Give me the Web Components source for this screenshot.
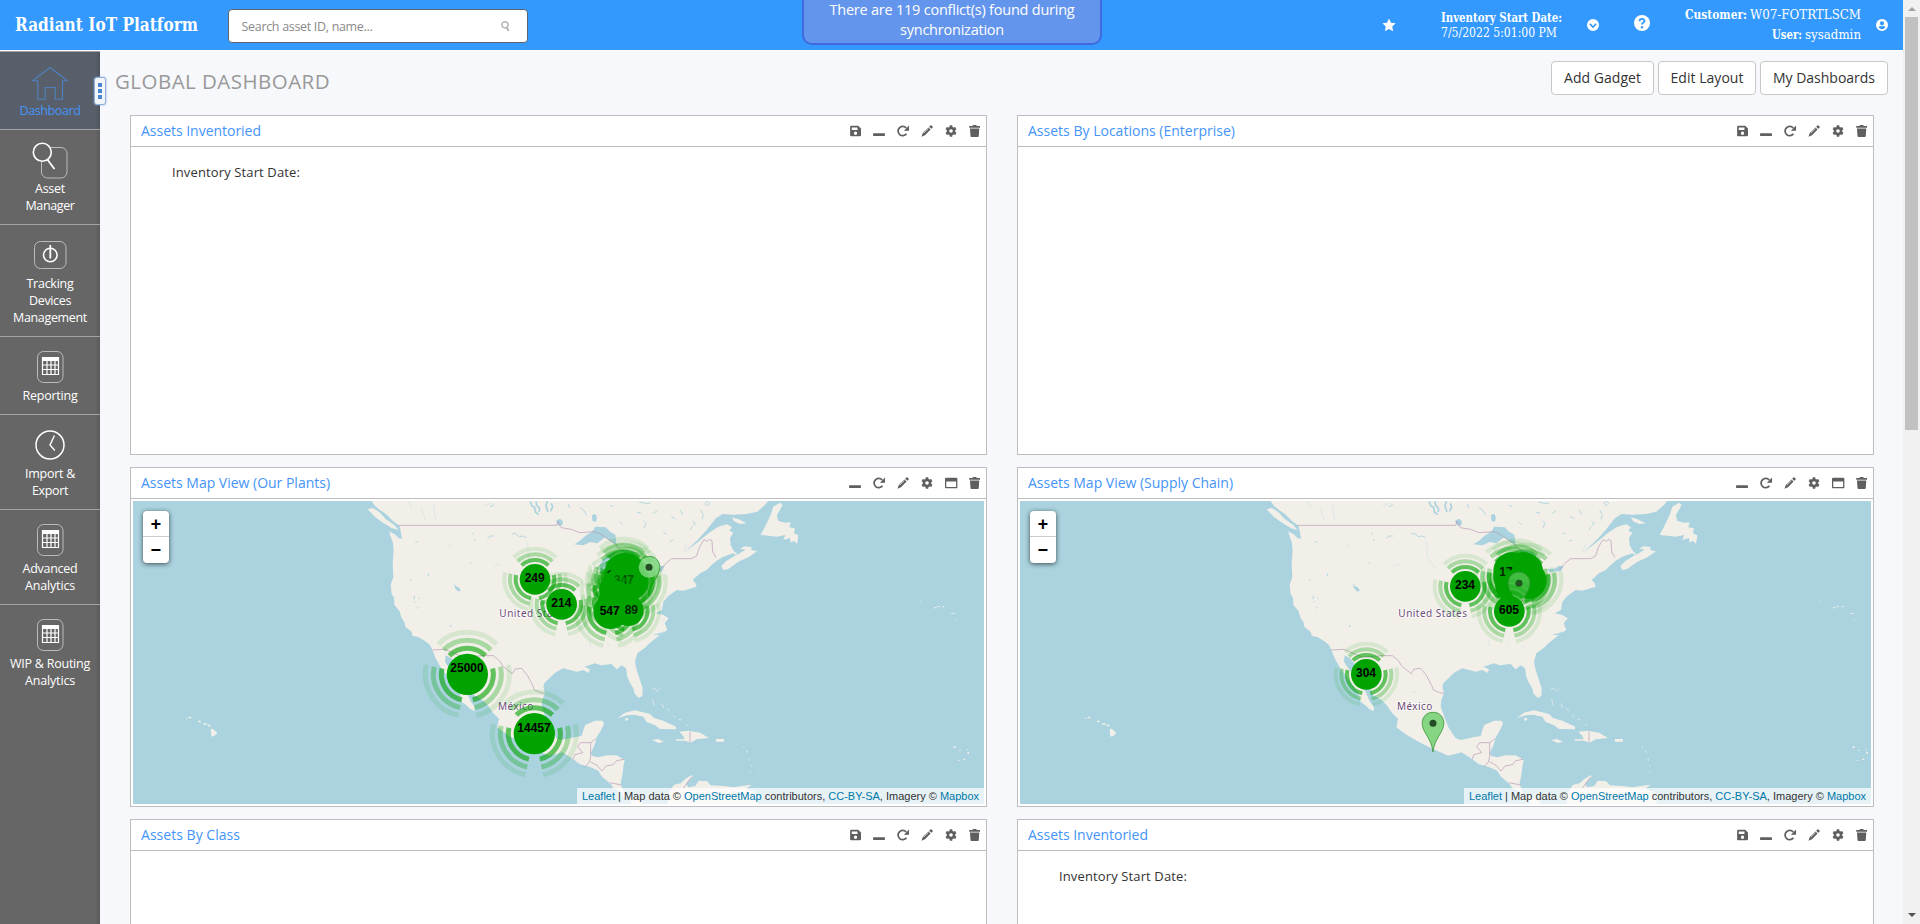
<!DOCTYPE html>
<html lang="en">
<head>
<meta charset="utf-8">
<title>Radiant IoT Platform</title>
<style>
html,body{margin:0;height:100%;overflow:hidden;background:#f6f8fb;font-family:"Open Sans","Noto Sans",sans-serif}
</style>
</head>
<body>
<iot-app></iot-app>
<script>
const define=(name,render,after)=>customElements.define(name,class extends HTMLElement{
  connectedCallback(){
    if(this.shadowRoot)return;
    const r=this.attachShadow({mode:'open'});
    r.innerHTML=render(this);
    if(after)after(this,r);
  }
});

/* Text set to an exact width: w = target px, mode "scale" condenses the glyphs */
define('fit-text',()=>`<style>:host{display:inline-block;white-space:nowrap;text-align:left}span{display:inline-block;transform-origin:0 50%}</style><span><slot></slot></span>`,
(el,r)=>{
  const w=+el.getAttribute('w'),s=r.querySelector('span'),have=s.getBoundingClientRect().width;
  if(!w||!have)return;
  if(el.getAttribute('mode')==='scale'){s.style.transform=`scaleX(${w/have})`;el.style.width=w+'px'}
  else s.style.letterSpacing=((w-have)/el.textContent.length)+'px';
});

const G={
save:'<path fill-rule="evenodd" d="M2.800 1h9.400L16 4.600V13.800a1.300 1.300 0 0 1-1.300 1.300H2.800a1.300 1.300 0 0 1-1.300-1.300V2.300A1.300 1.300 0 0 1 2.800 1zM3.700 3.200v3.600h7.600V3.200zM8.700 8.800a2.200 2.200 0 1 0 0 4.400a2.200 2.200 0 0 0 0-4.400z"/>',
min:'<rect x="0" y="11" width="16" height="3.600" rx="1"/>',
redo:'<path d="M12.600 11.800A6.200 6.200 0 1 1 12.300 4" fill="none" stroke="currentColor" stroke-width="2.300"/><path d="M16 .8v6.800H9.200z"/>',
pen:'<path d="M10 3.200l2.800 2.800-7.500 7.500L.5 15.500l2-4.800zM10.900 2.300l1.600-1.500a1.200 1.200 0 0 1 1.700 0l1.100 1.100a1.200 1.200 0 0 1 0 1.700L13.700 5.100z"/><path d="M3.800 10.800l6-6" stroke="#fff" stroke-width=".8"/>',
gear:'<path fill-rule="evenodd" d="M6.400.4h3.200l.4 2.200 1.400.8 2.200-.7 1.600 2.800-1.600 1.500v1.900l1.600 1.500-1.600 2.800-2.200-.7-1.400.8-.4 2.200H6.400l-.4-2.200-1.400-.8-2.200.7L.8 10.400l1.600-1.500V7L.8 5.500l1.600-2.800 2.200.7L6 2.600zM8 5.600a2.400 2.400 0 1 0 0 4.800a2.400 2.400 0 0 0 0-4.800z"/>',
max:'<path fill-rule="evenodd" d="M1.500 1h13.500A1.500 1.500 0 0 1 16.500 2.500v11.600a1 1 0 0 1-1 1H1a1 1 0 0 1-1-1V2.500a1.500 1.500 0 0 1 1.500-1.500zM1.700 6v7.400h13.100V6z"/>',
trash:'<path d="M.3 1.300h4.200L5.500 0h4l1 1.300h4.200v2.200H.3zM1.300 4.500h12.400l-.7 10.300a1.300 1.300 0 0 1-1.300 1.200H3.300A1.300 1.300 0 0 1 2 14.800z"/>',
star:'<path d="M8 .5l2.300 4.900 5.300.7-3.900 3.700 1 5.400L8 12.600l-4.700 2.600 1-5.400L.4 6.100l5.300-.7z"/>',
down:'<path fill-rule="evenodd" d="M8 0a8 8 0 1 0 0 16A8 8 0 0 0 8 0zM4.600 5.800L8 9.200l3.400-3.400 1.500 1.500L8 12.200 3.100 7.300z"/>',
help:'<circle cx="8" cy="8" r="8"/><path d="M5.500 6.200C5.700 3 10.600 3.200 10.400 6 10.300 7.700 8 7.700 8 9.600" fill="none" stroke="#39f" stroke-width="1.900"/><circle cx="8" cy="12.200" r="1.200" fill="#39f"/>',
user:'<path fill-rule="evenodd" d="M8 0a8 8 0 1 0 0 16A8 8 0 0 0 8 0zM8 3a2.800 2.800 0 1 1 0 5.600A2.800 2.800 0 0 1 8 3zM3.500 11c1.200-1.500 2.200-1.700 3-1.700.8.400 2.200.4 3 0 .8 0 1.800.2 3 1.700-.8 1.300-2.500 2.600-4.500 2.600S4.300 12.300 3.500 11z"/>',
find:'<circle cx="8" cy="6" r="5" fill="none" stroke="currentColor" stroke-width="2.400"/><path d="M10.500 10l3.500 6" stroke="currentColor" stroke-width="3"/>'
};
define('glyph-icon',el=>`<style>:host{display:block;width:${el.getAttribute('size')||12}px;height:${el.getAttribute('size')||12}px}svg{display:block;width:100%;height:100%;overflow:visible}</style><svg viewBox="0 0 16 16" fill="currentColor">${G[el.getAttribute('name')]}</svg>`);

/* Large outline icons of the navigation, on a 40px grid */
const sheet='<rect x="7.500" y="4.500" width="25.500" height="31" rx="6" stroke="#bbb"/><path d="M12.500 10.500h16v17h-16z M12.500 18h16M12.500 22.500h16M17 14v13M21 14v13M25 14v13" stroke-width="1.200"/><path d="M12 10h17v4H12z" fill="#fff" stroke="none"/>';
const N={
home:'<path d="M2.700 18.800L20 5.500l17.500 13.300h-5v18.500h-7.300V25.500h-10v11.800H7.800V18.800z" stroke="#4d82bf" stroke-width="1.100"/>',
asset:'<path d="M21 7.500h10a6 6 0 0 1 6 6v18.500a6 6 0 0 1-6 6H17.500a6 6 0 0 1-6-6V22" stroke="#bbb"/><circle cx="12.300" cy="12.300" r="9" stroke-width="1.600" fill="#666"/><path d="M17.500 19.700l7 9.300" stroke-width="1.800"/>',
track:'<rect x="4.500" y="6.500" width="31.500" height="27" rx="6" stroke="#bbb"/><circle cx="20.300" cy="20" r="6.800" stroke-width="1.600"/><path d="M20.300 10v13.500" stroke-width="1.800"/>',
clock:'<circle cx="20" cy="20" r="14" stroke-width="1.500"/><path d="M24.500 10.500L20 20l4.800 5.500" stroke-width="1.400"/>',
sheet
};
define('nav-item',el=>`<style>
:host{display:flex;flex-direction:column;align-items:center;box-sizing:border-box;width:100px;border-top:1px solid #a3a3a3;padding:10px 8px;color:#fff;background:linear-gradient(90deg,transparent 95px,rgba(0,0,0,.12)),${el.hasAttribute('active')?'#585f6a':'#666'}}
:host([active]){color:#4594f8}
svg{width:40px;height:40px;display:block;flex:none}
div{font-size:12.500px;line-height:17px;text-align:center;white-space:nowrap}
</style><svg viewBox="0 0 40 40" fill="none" stroke="#fff">${N[el.getAttribute('icon')]}</svg><div><slot></slot></div>`);

define('side-nav',()=>`<style>
:host{display:block;position:relative;width:100px;flex:none;background:linear-gradient(90deg,transparent 95px,rgba(0,0,0,.12)),#666}
.grip{position:absolute;left:94px;top:26px;width:10px;height:26px;border:1px solid #8fb0dc;border-radius:3px;background:#f3f5f9;box-shadow:0 0 2px #7fa4d8;display:flex;flex-direction:column;align-items:center;justify-content:center;gap:2px}
.grip i{width:4px;height:4px;background:#4a86cf}
nav{display:flex;flex-direction:column}
</style><nav>
<nav-item icon="home" active><fit-text w="61">Dashboard</fit-text></nav-item>
<nav-item icon="asset"><fit-text w="30">Asset</fit-text><br><fit-text w="49">Manager</fit-text></nav-item>
<nav-item icon="track"><fit-text w="47">Tracking</fit-text><br><fit-text w="42">Devices</fit-text><br><fit-text w="74">Management</fit-text></nav-item>
<nav-item icon="sheet"><fit-text w="55">Reporting</fit-text></nav-item>
<nav-item icon="clock"><fit-text w="50">Import &amp;</fit-text><br><fit-text w="36">Export</fit-text></nav-item>
<nav-item icon="sheet"><fit-text w="55">Advanced</fit-text><br><fit-text w="50">Analytics</fit-text></nav-item>
<nav-item icon="sheet"><fit-text w="80">WIP &amp; Routing</fit-text><br><fit-text w="50">Analytics</fit-text></nav-item>
</nav><div class="grip"><i></i><i></i><i></i></div>`);

define('top-bar',()=>`<style>
:host{display:flex;position:relative;height:50px;background:#39f;border-bottom:1px solid #fff;color:#fff;align-items:flex-start}
.slab{font-family:"DejaVu Serif Condensed","DejaVu Serif",serif;font-stretch:condensed}
.logo{margin:12px 0 0 15px;font-size:18px;font-weight:bold;line-height:26px;width:213px}
.search{box-sizing:border-box;width:300px;height:34px;margin-top:9px;border:1px solid #5d6470;border-radius:4px;background:#fff;color:#8a8a8a;display:flex;align-items:center;justify-content:space-between;padding:0 17px 0 12.500px;font-size:12.500px}
.search glyph-icon{color:#b5b5b5}
.sp{flex:1}
.star{margin:18px 45px 0 0}
.date{font-size:12.500px;line-height:15px;margin-top:10px;width:146px}
.date div{white-space:nowrap}
.dn{margin-top:18.500px}
.hp{margin:15px 35px 0 35px}
.who{font-size:12.500px;line-height:20px;margin-top:5px;width:176px}
.who div{display:flex;justify-content:flex-end;gap:3px;white-space:nowrap}
.us{margin:18.500px 15px 0}
b{font-weight:bold}
.toast{position:absolute;left:802px;top:-20px;width:300px;height:65px;box-sizing:border-box;border:2px solid #4169e1;border-radius:10px;background:#6495ed;display:flex;flex-direction:column;align-items:center;justify-content:flex-end;padding-bottom:3px;font-size:14.500px;line-height:20px}
</style>
<div class="logo slab"><fit-text mode="scale" w="183">Radiant IoT Platform</fit-text></div>
<div class="search"><fit-text w="131">Search asset ID, name...</fit-text><glyph-icon name="find" size="10"></glyph-icon></div>
<div class="sp"></div>
<glyph-icon class="star" name="star" size="14"></glyph-icon>
<div class="date slab"><div><b><fit-text mode="scale" w="121">Inventory Start Date:</fit-text></b></div><div><fit-text mode="scale" w="116">7/5/2022 5:01:00 PM</fit-text></div></div>
<glyph-icon class="dn" name="down" size="12"></glyph-icon>
<glyph-icon class="hp" name="help" size="16"></glyph-icon>
<div class="who slab"><div><b><fit-text mode="scale" w="62">Customer:</fit-text></b><fit-text mode="scale" w="111">W07-FOTRTLSCM</fit-text></div><div><b><fit-text mode="scale" w="30">User:</fit-text></b><fit-text mode="scale" w="56">sysadmin</fit-text></div></div>
<glyph-icon class="us" name="user" size="12"></glyph-icon>
<div class="toast"><fit-text w="245">There are 119 conflict(s) found during</fit-text><fit-text w="104">synchronization</fit-text></div>`);

define('push-button',el=>`<style>:host{display:flex;box-sizing:border-box;width:${el.getAttribute('width')}px;height:34px;border:1px solid #c8c8c8;border-radius:4px;background:#fff;color:#333;font-size:14px;line-height:31px;justify-content:center}</style><slot></slot>`);

define('page-head',()=>`<style>
:host{display:flex;justify-content:space-between;align-items:flex-start;height:64px;padding:10px 15px 0 15px;box-sizing:border-box}
h1{margin:6px 0 0;font-size:20.500px;line-height:28px;font-weight:400;color:#999}
div{display:flex;gap:4px}
</style><h1><fit-text w="215">GLOBAL DASHBOARD</fit-text></h1>
<div><push-button width="103"><fit-text w="77">Add Gadget</fit-text></push-button><push-button width="98"><fit-text w="73">Edit Layout</fit-text></push-button><push-button width="128"><fit-text w="102">My Dashboards</fit-text></push-button></div>`);

define('dash-gadget',el=>`<style>
:host{display:flex;flex-direction:column;box-sizing:border-box;height:340px;border:1px solid #bdbdbd;background:#fff}
header{display:flex;justify-content:space-between;align-items:center;box-sizing:border-box;height:31px;border-bottom:1px solid #bdbdbd;padding:0 5px 1px 10px;color:#4594f8;font-size:14px}
.tools{display:flex;gap:12px;color:#5f5f5f}
.body{flex:1;padding:2px;font-size:13px;color:#333;min-height:0}
</style><header><fit-text w="${el.getAttribute('tw')}">${el.getAttribute('title')}</fit-text><div class="tools">${el.getAttribute('tools').split(' ').map(n=>`<glyph-icon name="${n}"></glyph-icon>`).join('')}</div></header><div class="body"><slot></slot></div>`);

define('start-date',()=>`<style>:host{display:block;padding:13px 0 0 39px;line-height:20px;color:#333}</style><fit-text w="128">Inventory Start Date:</fit-text>`);

/* Map drawing: three units to one pixel */
const LAND=`
<path d="M56 20L75 48 90 60 108 72 128 92 148 107 152 122 156 146 146 144 136 134 118 124 122 140 128 155 131 180 128 220 130 262 122 284 125 312 132 324 133 345 148 362 154 382 164 398 166 410 185 426 188 438 205 441 226 454 240 465 247 480 257 505 273 533 293 560 310 585 330 610 334 635 348 645 362 658 374 664 375 652 362 634 350 606 335 580 315 555 298 535 285 515 287 496 303 505 320 525 335 550 350 585 365 600 372 616 395 628 413 645 430 670 447 686 442 712 473 735 510 756 550 776 598 797 618 792 638 787 670 808 690 823 720 831 745 842 756 860 782 882 790 895 812 905 822 920 840 930 850 960 890 960 870 930 845 922 830 925 815 890 812 880 818 850 820 830 824 810 800 796 770 796 745 802 726 798 722 790 735 762 740 742 752 722 762 702 758 692 735 692 706 705 700 720 695 738 672 742 660 745 635 750 620 745 598 712 588 686 575 650 577 630 585 610 580 590 583 580 615 548 640 535 680 545 700 540 716 549 720 538 703 530 735 520 752 526 785 522 800 538 815 526 828 535 832 560 838 575 850 595 853 610 866 624 877 618 878 595 870 570 860 540 855 515 862 490 885 473 900 458 930 435 952 420 944 400 956 385 940 375 918 370 936 360 940 335 955 318 980 300 1000 302 1040 290 1036 278 1028 270 1050 250 1070 240 1085 225 1100 212 1120 200 1150 190 1160 196 1185 180 1205 170 1204 180 1221 184 1195 202 1165 215 1135 237 1120 240 1114 228 1130 212 1150 200 1162 192 1152 184 1142 165 1140 145 1150 128 1138 122 1146 112 1132 103 1105 110 1075 130 1045 155 1025 170 1002 188 1045 148 1070 120 1098 84 1118 72 1150 74 1190 72 1222 65 1245 45 1265 20z"/>
<path d="M1232 135L1245 110 1262 75 1270 50 1290 38 1298 45 1281 75 1284 92 1304 98 1322 97 1318 112 1335 115 1332 130 1345 136 1341 162 1332 152 1322 158 1320 144 1300 150 1306 135 1280 140 1255 137z"/>
<path d="M53 58L68 54 88 66 108 88 132 104 146 120 126 115 96 96 76 82z"/>
<path d="M1146 82l20 6 24 12-20 2-18-8zM1170 176l14-7 20 2-14 8z"/>
<path d="M803 685L825 668 855 661 900 672 912 684 940 692 978 710 978 718 930 717 915 706 890 696 880 680 852 674 830 676z"/>
<path d="M975 748L1004 748 1000 738 988 725 1015 722 1050 728 1077 744 1040 748 1022 758 1005 752 980 752z"/>
<path d="M906 750l18-3 18 8-16 4zM1098 747h24v8h-24zM826 684l8 0 0 7-8 1z"/>
<path d="M905 594l12 4 8 8M925 600l6-4M908 628l5 20M935 640l6 14M950 655l10 8M968 675l8 8M985 688l10 2M1008 705l6 0" fill="none" stroke="#f2efe9" stroke-width="2"/>
<path d="M1160 760l2 2M1180 770l2 3M1190 782l2 6M1197 806l2 6M1201 826l3 4M1200 844l3 2M1226 841l2 1M1190 868l2 1" fill="none" stroke="#f2efe9" stroke-width="2.500"/>
<path d="M950 960L956 908 972 884 992 880 1005 868 1025 855 1028 860 1008 882 1015 892 1036 888 1046 872 1072 874 1082 886 1120 888 1150 892 1190 886 1205 884 1188 896 1215 905 1230 960z"/>
<path d="M-418 718l6-2 14 12-6 8-12 4zM-456 692h8v5h-8zM-440 700h10v4h-10zM-428 704h10v5h-8zM-484 680h8v5h-8zM-492 684h4v3h-4z"/>
<path d="M1710 333h4v2h-4zM1752 352h8v3h-8zM1764 348h6v3h-6zM1778 348h5v4h-5zM1803 369h12v2h-12zM1816 387h3v2h-3zM1811 769h6v5h-6zM1827 780h5v2h-5zM1852 786h5v5h-5zM1840 806h6v4h-6zM1823 810h6v2h-6zM1851 778h3v3h-3z"/>`;
const LAKES=`<path d="M673 163L690 152 706 138 728 124 735 110 768 112 778 124 796 134 800 165 785 156 765 142 742 160 722 156 700 166z"/>
<path d="M750 250L748 225 762 205 784 190 800 186 780 215 770 245zM810 178L850 186 875 214 866 242 840 240 830 200zM893 238L915 236 930 228 944 228 936 244 900 246zM830 275L880 250 888 256 850 280z"/>
<path d="M312 282l8 8 6 2 6 8-4 5-6-3-7-8zM726 75l10-3 5 10-4 14-10-4zM618 92l12-6 8 6 0 12-12 4zM360 216l4 4-4 3zM298 408l8-4-4 8zM232 255l4-5 2 8zM944 424l-14 12-22-2 20-4z"/>
<g fill="none" stroke="#aad3df"><path d="M540 34l6 14 8 4 2 14 10 8M558 34l2 12 8 8 0 12M592 34l-4 14 6 18M604 40l4 10-6 14" stroke-width="5"/><path d="M486 132l10-2 12 10 10-2 12 4M412 146l8-8 12 0M690 52l12 10 8 14M655 42l4 12M420 50l12-6M868 36l18 4 14 0M910 70l12-8M990 60l8 14M964 80l12 6M860 66l14 4M880 92l8 8-6 14M1052 60l8 14-4 14M1020 120l6-10M1028 94l8 6-8 8M960 154l10-4M940 128l10 4M810 96l8 8M780 46l10 4M1072 34a6 6 0 1 0 .1 0M196 156h8M182 268v5M190 318l4 2-2 8M205 325h4M192 336h4M368 128l2 6M372 150h6M200 355l6-4" stroke-width="2.500"/><path d="M175 34l10 18M212 52l6 14 8 26M250 44l4 30 4 18M400 48l24-8M290 160l14 10M528 150l6 18 0 30 10 20 20 18M350 500l10 6M490 606h12M430 230l12-8 12 4M935 395l10-8M720 450l2 20M770 460l8 10M1010 160l-8 26M820 470l6 2" stroke-width="1.500" opacity=".6"/></g>`;
const BORDERS=`<g fill="none" stroke="#b795b4" stroke-width="2.300" stroke-linejoin="round" opacity=".85"><path d="M145 106H620L624 94 634 113 664 118 690 128 735 125 752 132 770 145 797 162 805 175 825 188M930 240L948 220 965 206H1025L1040 198 1048 172 1062 149 1072 154 1078 148 1086 152 1088 185 1098 203M247 480L285 478 340 502 398 497 430 497 448 512 460 530 487 551 495 537 515 535 532 556 548 586 553 600 572 608 585 610M670 808L674 794 698 788 683 770 692 758H722L738 746M722 758V800L718 816 706 830M722 816L740 825 756 843 768 828 790 824 800 812 822 808M780 878L815 885M1020 724V758M1025 860L1000 895"/></g>`;
const arc=(r,a,b)=>{const p=d=>[(r*Math.cos(d*Math.PI/180)).toFixed(1),(r*Math.sin(d*Math.PI/180)).toFixed(1)];return`M${p(a)}A${r} ${r} 0 0 1 ${p(b)}`};
const K={s:[46,[58,75,92],12,5],m:[52,[65,85,104],13,5],l:[62,[78,102,126],15,19]};
const cluster=(x,y,k,t)=>{const[r,rs,w,dy]=K[k];return`<g transform="translate(${x} ${y})"><g fill="none" stroke="#00a300" stroke-width="${w}">${rs.map((q,i)=>`<path opacity="${[.6,.3,.11][i]}" d="${arc(q,-134,-46)}${arc(q,-13,78)}${arc(q,102,193)}"/>`).join('')}</g><circle r="${r}" fill="#00a300"/>${t?`<text x="-1" y="${13-dy}">${t}</text>`:''}</g>`};
const pin=(x,y,o=.82)=>`<g transform="translate(${x} ${y})"><path d="M0 86C-3 60-14 45-24 27-33 12-33-2-32-6-28-26-14-33 0-33S28-26 32-6C33-2 33 12 24 27 14 45 3 60 0 86z" fill="#6ccf6c" fill-opacity="${o}" stroke="#3c973c" stroke-width="2.500"/><circle r="10.500" fill="#254d25"/></g>`;
const MARKS={
plants:cluster(555,268,'s','249')+cluster(635,343,'s','214')+cluster(352,553,'l','25000')+cluster(553,731,'l','14457')
 +pin(897,232)
 +cluster(800,300,'m')+cluster(843,276,'m')+cluster(815,270,'m')+cluster(828,262,'m')+cluster(822,250,'m')
 +'<g fill="#00a300"><circle cx="824" cy="250" r="61"/><circle cx="822" cy="280" r="62"/></g><circle cx="897" cy="232" r="31" fill="#8fdc8f" fill-opacity=".75"/><circle cx="897" cy="232" r="10.500" fill="#254d25"/>'
 +'<text x="822" y="283" opacity=".55">347</text><path d="M793 274h30v12h-30z" fill="#00a300"/><path d="M806 297q6-5 12 0" fill="none" stroke="#045" stroke-width="2" opacity=".6"/><path d="M770 247l10-8 3 3-8 8z" fill="#031"/>'
 +cluster(790,335,'s')+cluster(835,362,'s')+cluster(782,365,'m')+'<text x="844" y="371" opacity=".8">89</text><text x="779" y="374">547</text>',
supply:`<g transform="translate(-27 0)">`+cluster(676,289,'s','234')+cluster(379,553,'s','304')+cluster(840,270,'m')+cluster(860,268,'m')+cluster(812,262,'m')+cluster(832,255,'m')
 +'<g fill="#00a300"><circle cx="815" cy="242" r="55"/><circle cx="852" cy="244" r="57"/><circle cx="865" cy="272" r="55"/><circle cx="815" cy="285" r="50"/></g><text x="798" y="257" opacity=".8">17</text><path d="M797 241h22v18h-22z" fill="#00a300"/>'
 +pin(837,280,.6)+cluster(808,364,'s','605')+pin(579,700)+'</g>'
};
define('leaflet-map',el=>{const sup=el.getAttribute('set')==='supply';return`<style>
:host{display:block;position:relative;height:303px;overflow:hidden;background:#aad3df}
svg{display:block}
.mk text{font:bold 36px "Liberation Sans",Arial,sans-serif;text-anchor:middle;fill:#000}
.lb text{font:30px "Noto Sans",sans-serif;fill:#6d4b78;stroke:#fff;stroke-width:5px;stroke-opacity:.8;paint-order:stroke}
.zoom{position:absolute;left:10px;top:10px;width:26px;border-radius:4px;background:#fff;box-shadow:0 1px 5px rgba(0,0,0,.65);color:#000}
.zoom div{height:26px;font:bold 18px/28px "Liberation Mono",monospace;text-align:center}
.zoom div:first-child{height:25px;border-bottom:1px solid #ccc}
.att{position:absolute;right:0;bottom:0;height:16px;padding:0 5px;background:rgba(255,255,255,.7);font:11px/16px "Liberation Sans",Arial,sans-serif;color:#333}
a{color:#0078a8}
</style><svg width="851" height="303" viewBox="0 0 851 303"><g transform="translate(${sup?229:217} -11) scale(.33333)"><g fill="#f2efe9">${LAND}</g><g fill="#aad3df">${LAKES}</g>${BORDERS}<g class="lb"><text x="448" y="380" textLength="206">United States</text><text x="444" y="660" textLength="106">México</text></g><g class="mk">${MARKS[sup?'supply':'plants']}</g></g></svg>
<div class="zoom"><div>+</div><div>−</div></div>
<div class="att"><fit-text w="397">${'<a>Leaflet</a> | Map data © <a>OpenStreetMap</a> contributors, <a>CC-BY-SA</a>, Imagery © <a>Mapbox</a>'}</fit-text></div>`});

define('scroll-bar',()=>`<style>:host{display:flex;flex-direction:column;align-items:center;width:17px;flex:none;background:#f1f1f1;box-sizing:border-box}
.u,.d{width:0;border:4px solid transparent}.u{border-top:0;border-bottom:4px solid #a3a3a3;margin:7px 0 6px}.d{border-bottom:0;border-top:4px solid #505050;margin-bottom:7px}
.t{width:13px;height:413px;background:#c1c1c1}.s{flex:1}</style><div class="u"></div><div class="t"></div><div class="s"></div><div class="d"></div>`);

define('iot-app',()=>{const A='save min redo pen gear trash',B='min redo pen gear max trash';return`<style>
:host{display:flex;height:100vh;overflow:hidden}
.main{flex:1;display:flex;flex-direction:column;min-width:0}
.row{flex:1;display:flex;min-height:0}
.content{flex:1;min-width:0;overflow:hidden}
.grid{display:grid;grid-template-columns:857px 857px;column-gap:30px;row-gap:12px;padding-left:30px}
</style><div class="main"><top-bar></top-bar><div class="row"><side-nav></side-nav><div class="content"><page-head></page-head><div class="grid">
<dash-gadget title="Assets Inventoried" tw="120" tools="${A}"><start-date></start-date></dash-gadget>
<dash-gadget title="Assets By Locations (Enterprise)" tw="207" tools="${A}"></dash-gadget>
<dash-gadget title="Assets Map View (Our Plants)" tw="189" tools="${B}"><leaflet-map set="plants"></leaflet-map></dash-gadget>
<dash-gadget title="Assets Map View (Supply Chain)" tw="205" tools="${B}"><leaflet-map set="supply"></leaflet-map></dash-gadget>
<dash-gadget title="Assets By Class" tw="99" tools="${A}"></dash-gadget>
<dash-gadget title="Assets Inventoried" tw="120" tools="${A}"><start-date></start-date></dash-gadget>
</div></div></div></div><scroll-bar></scroll-bar>`});
</script>
</body>
</html>
